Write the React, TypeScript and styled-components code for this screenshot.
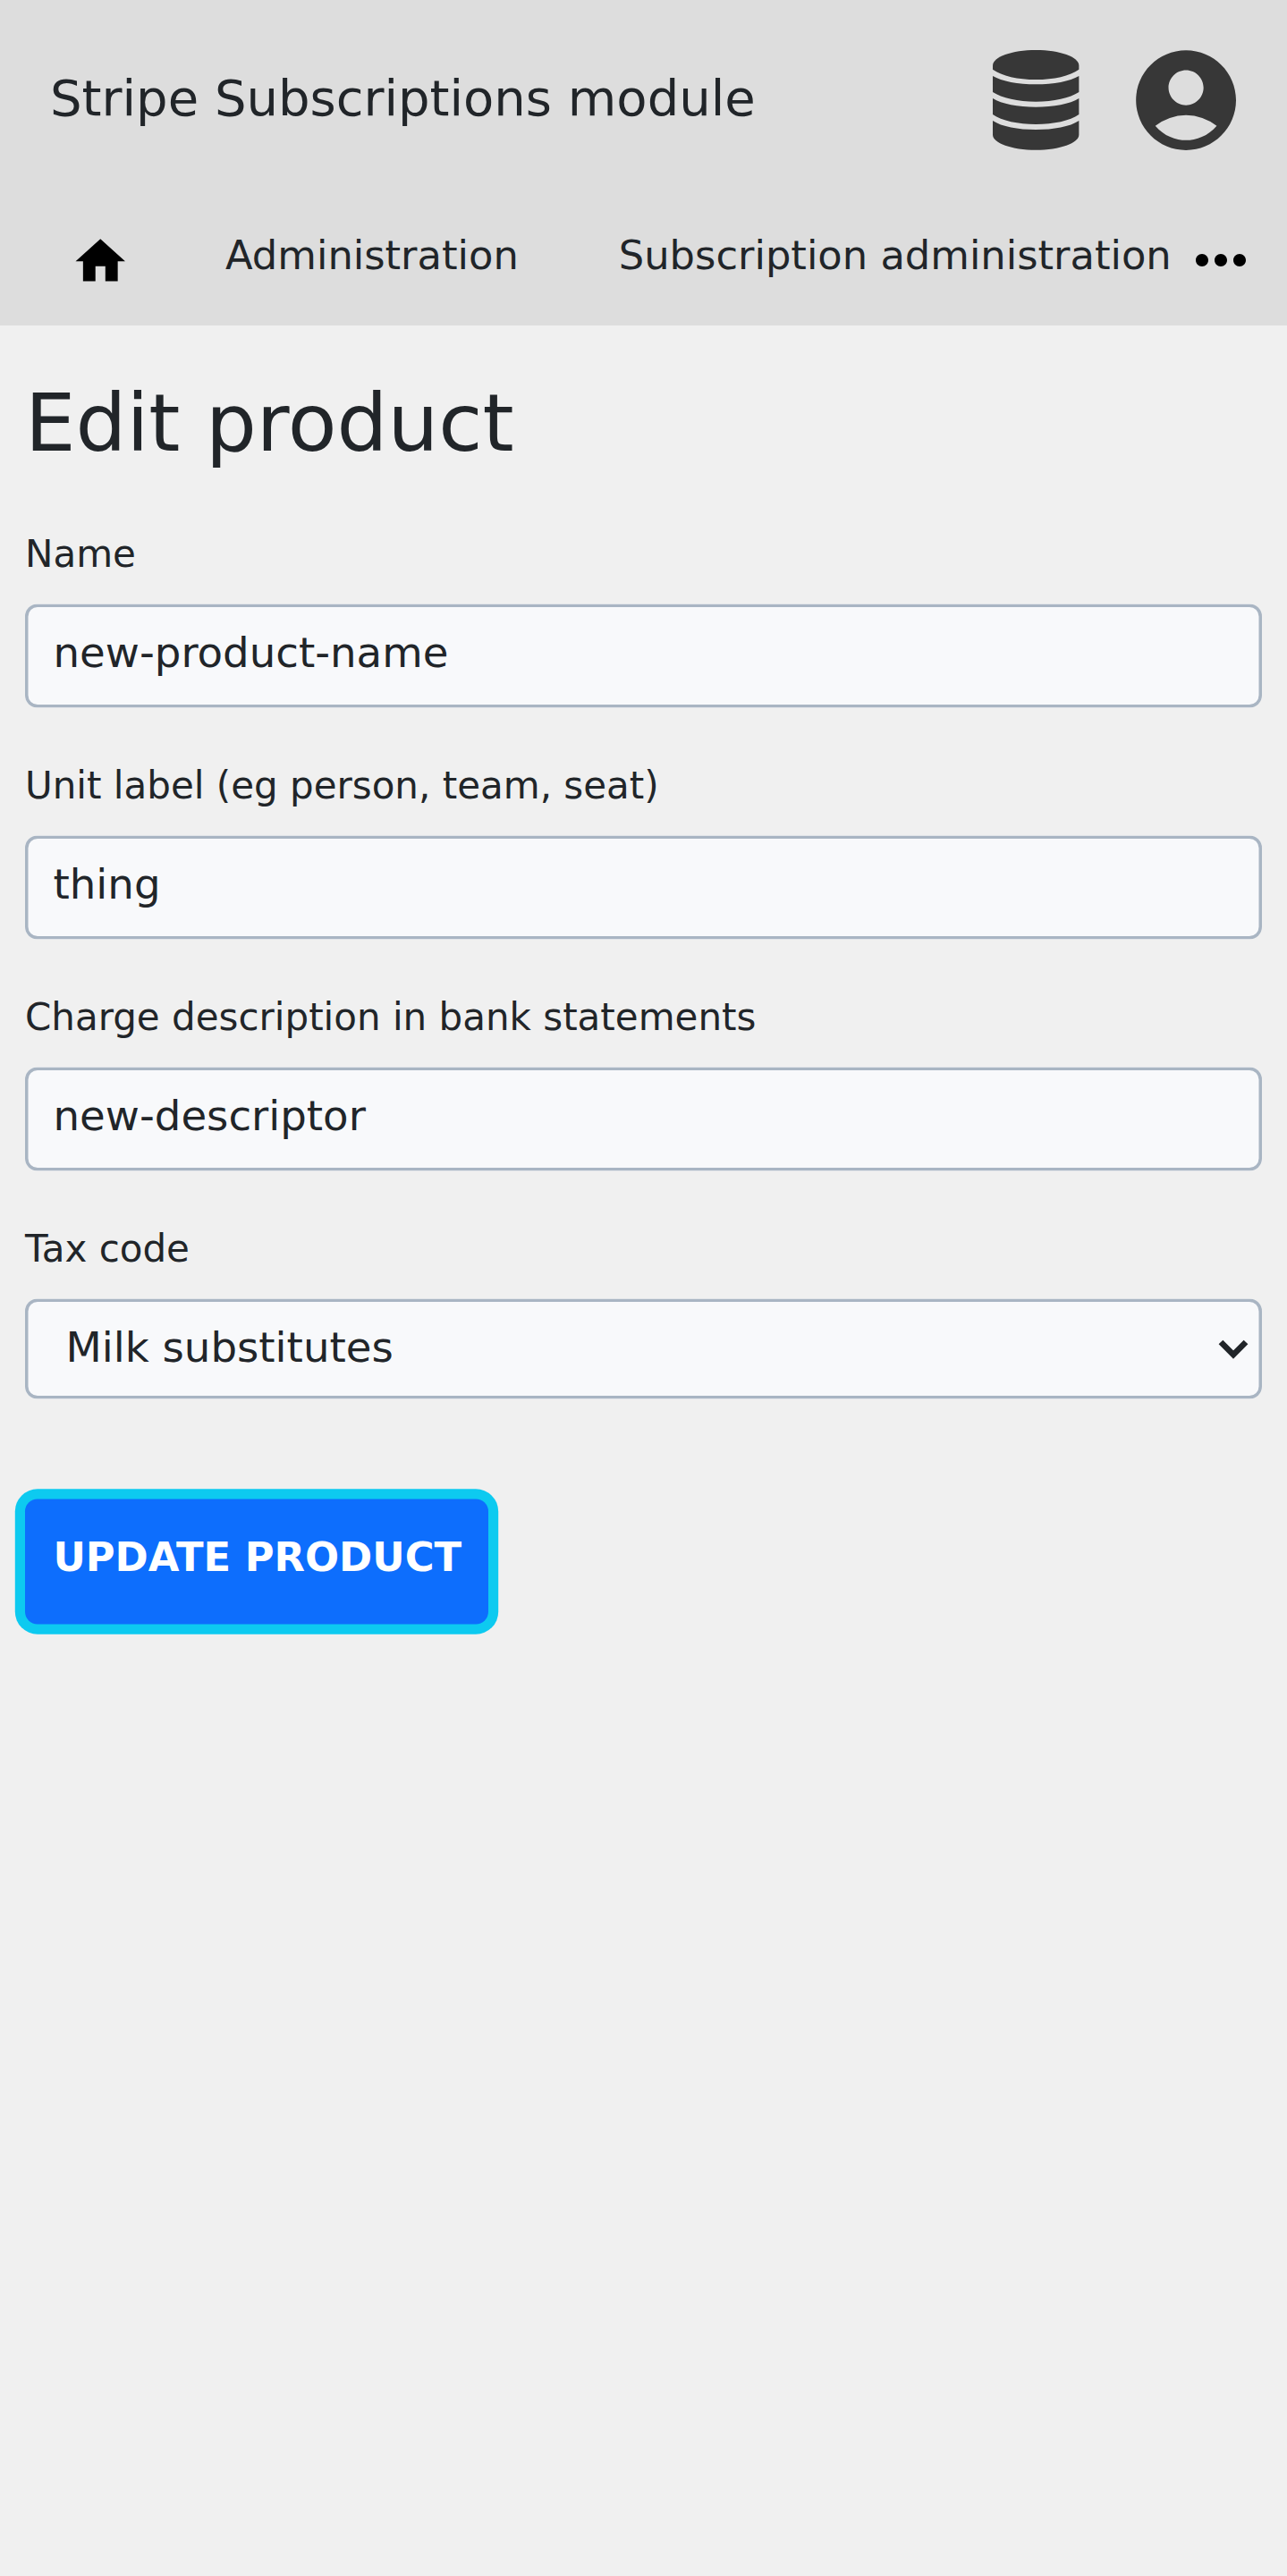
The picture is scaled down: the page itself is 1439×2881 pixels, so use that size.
import React from "react";
import styled, { createGlobalStyle } from "styled-components";
import { MdAccountCircle, MdMoreHoriz } from "react-icons/md";

const GlobalStyle = createGlobalStyle`
  *, *::before, *::after { box-sizing: border-box; }
  html, body { margin: 0; background: #f0f0f0; }
  body {
    color: #212529;
    font-family: "DejaVu Sans", sans-serif;
  }
  svg { display: block; flex: none; }
`;

const Page = styled.div`
  min-height: 2881px;
  background: #f0f0f0;
`;

const Header = styled.header`
  background: #dddddd;
  height: 364px;
`;

const TitleBar = styled.div`
  display: flex;
  align-items: center;
  height: 224px;
  padding: 0 45.4px 0 56px;
  color: #373737;
`;

const SiteTitle = styled.div`
  flex: 1;
  color: #212529;
  font-size: 56px;
  line-height: 84px;
  margin-top: -4px;
`;

const IconLink = styled.a<{ $gap?: number }>`
  display: flex;
  margin-right: ${(p) => p.$gap ?? 0}px;
`;

const Nav = styled.nav`
  display: flex;
  align-items: flex-start;
  height: 140px;
  padding: 24px 32px 0 79px;
  color: #000;
`;

const NavLink = styled.a<{ $gap: number }>`
  color: #212529;
  font-size: 44.8px;
  line-height: 67px;
  margin-left: ${(p) => p.$gap}px;
  margin-top: 4px;
  white-space: nowrap;
`;

const HomeLink = styled.a`
  display: flex;
  margin-top: 10.6px;
`;

const MoreButton = styled.a`
  display: flex;
  margin-left: auto;
  margin-top: 0.5px;
`;

const Main = styled.main`
  display: flex;
  flex-direction: column;
  align-items: stretch;
  padding: 56px 28px 0;
`;

const Heading = styled.h1`
  margin: 0 0 56px;
  font-size: 89.6px;
  font-weight: 400;
  line-height: 107px;
`;

const Field = styled.label`
  display: flex;
  flex-direction: column;
  height: 259px;
`;

const LabelText = styled.span`
  font-size: 42px;
  line-height: 63px;
  height: 92px;
  padding-top: 5px;
`;

const Control = styled.div<{ $height: number; $indent: number; $top: number }>`
  position: relative;
  z-index: 0;
  display: flex;
  align-items: flex-start;
  justify-content: space-between;
  flex: none;
  height: ${(p) => p.$height}px;
  padding: ${(p) => p.$top}px 15px 0 ${(p) => p.$indent}px;
  font-size: 46.667px;
  line-height: 54px;

  &::before {
    content: "";
    position: absolute;
    inset: 0;
    z-index: -1;
    transform: translateY(0.5px);
    border-radius: 14px;
    background: #f8f9fb;
    box-shadow: inset 0 0 0 3.5px #a9b5c3;
  }

  svg { margin-top: 18px; }
`;

const SubmitButton = styled.button`
  position: relative;
  z-index: 0;
  align-self: flex-start;
  width: 518px;
  height: 140px;
  margin-top: 57px;
  padding: 0 0 9px 1.5px;
  border: 0;
  background: none;
  color: #fff;
  font: 700 44.8px/67px "DejaVu Sans", sans-serif;
  text-transform: uppercase;

  &::before {
    content: "";
    position: absolute;
    inset: 0;
    z-index: -1;
    transform: translateY(0.5px);
    border-radius: 14px;
    background: #0d6efd;
    box-shadow: 0 0 0 11.2px #0dcaf0;
  }
`;

const DatabaseIcon = () => (
  <svg width="96.4" height="111.7" viewBox="91 78 289 335" fill="currentColor">
    <path d="M91 130C91 101 155 78 235.5 78S380 101 380 130V143C350 165 295 177 235.5 177S121 165 91 143Z" />
    <path d="M91 165C121 183 176 193 235.5 193S350 183 380 165V219C350 239 295 251 235.5 251S121 239 91 219Z" />
    <path d="M91 240C121 259 176 269 235.5 269S350 259 380 240V294C350 315 295 327 235.5 327S121 315 91 294Z" />
    <path d="M91 315C121 335 176 345 235.5 345S350 335 380 315V362C380 390 316 413 235.5 413S91 390 91 362Z" />
  </svg>
);

const HomeIcon = () => (
  <svg width="66.5" height="66.5" viewBox="0 0 24 24" fill="currentColor">
    <path d="M10 20v-6h4v6h5v-8h3L12 3 2 12h3v8z" />
  </svg>
);

const Chevron = () => (
  <svg width="34" height="22" viewBox="0 0 34 22" fill="none" stroke="currentColor" strokeWidth="6.7">
    <path d="M3 3l14 14L31 3" />
  </svg>
);

const fields = [
  { label: "Name", value: "new-product-name" },
  { label: "Unit label (eg person, team, seat)", value: "thing" },
  { label: "Charge description in bank statements", value: "new-descriptor" },
];

export default function App() {
  return (
    <Page>
      <GlobalStyle />
      <Header>
        <TitleBar>
          <SiteTitle>Stripe Subscriptions module</SiteTitle>
          <IconLink $gap={52.6}>
            <DatabaseIcon />
          </IconLink>
          <IconLink>
            <MdAccountCircle size={134.2} />
          </IconLink>
        </TitleBar>
        <Nav>
          <HomeLink>
            <HomeIcon />
          </HomeLink>
          <NavLink $gap={106.5}>Administration</NavLink>
          <NavLink $gap={112}>Subscription administration</NavLink>
          <MoreButton>
            <MdMoreHoriz size={84} />
          </MoreButton>
        </Nav>
      </Header>
      <Main>
        <Heading>Edit product</Heading>
        {fields.map((f) => (
          <Field key={f.label}>
            <LabelText>{f.label}</LabelText>
            <Control $height={115.5} $indent={31.5} $top={28}>
              {f.value}
            </Control>
          </Field>
        ))}
        <Field as="div">
          <LabelText>Tax code</LabelText>
          <Control $height={112} $indent={45.5} $top={28}>
            Milk substitutes
            <Chevron />
          </Control>
        </Field>
        <SubmitButton>Update product</SubmitButton>
      </Main>
    </Page>
  );
}
